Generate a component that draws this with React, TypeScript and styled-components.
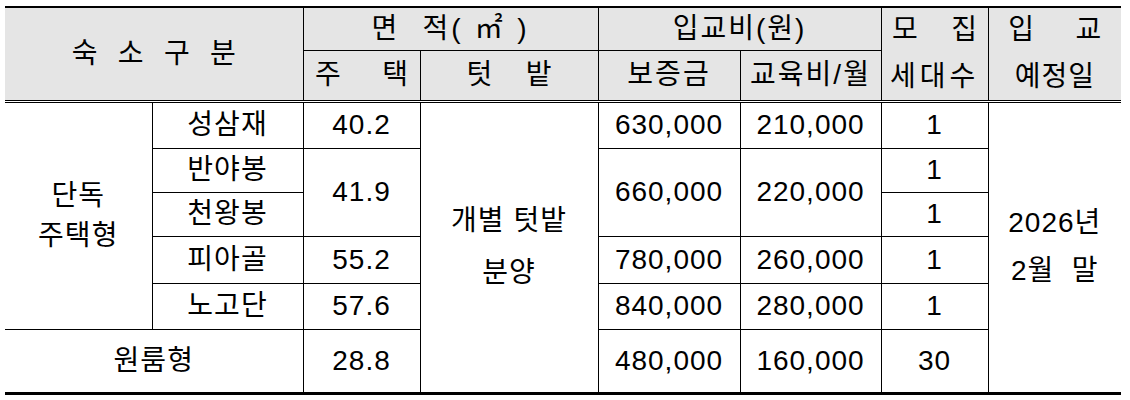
import React from 'react'
import styled, { createGlobalStyle } from 'styled-components'

const GlobalStyle = createGlobalStyle`
  body {
    margin: 0;
    background: #fff;
    font-family: "Liberation Sans", "Noto Sans CJK KR", sans-serif;
    color: #000;
  }
`

const Page = styled.div`
  padding: 6px 0 0 5px;
`

const Table = styled.table`
  border-collapse: collapse;
  table-layout: fixed;
  width: 1116px;
  border-top: 2px solid #000;
  border-bottom: 3px solid #000;
  font-size: 28px;
`

const Row = styled.tr<{ $h: number }>`
  height: ${({ $h }) => $h}px;
`

const Cell = styled.td<{ $noLeft?: boolean; $noRight?: boolean; $lh?: number }>`
  border: 1px solid #000;
  border-left: ${({ $noLeft }) => ($noLeft ? 'none' : '1px solid #000')};
  border-right: ${({ $noRight }) => ($noRight ? 'none' : '1px solid #000')};
  padding: 0;
  text-align: center;
  vertical-align: middle;
  letter-spacing: 1px;
  line-height: ${({ $lh }) => ($lh ? `${$lh}px` : '32px')};
  font-weight: normal;
`

const Head = styled(Cell).attrs({ as: 'th' })<{ $double?: boolean }>`
  background: #e5e5e5;
  border-bottom: ${({ $double }) => ($double ? '3px double #000' : '1px solid #000')};
`

const Spread = styled.span<{ $w: number; $ls?: number }>`
  display: inline-block;
  width: ${({ $w }) => $w}px;
  text-align: justify;
  text-align-last: justify;
  letter-spacing: ${({ $ls }) => $ls ?? 0}px;
  white-space: nowrap;
`

const Spaced = styled.span<{ $ls: number }>`
  letter-spacing: ${({ $ls }) => $ls}px;
`

const HeadLine = styled.div<{ $gap?: number }>`
  line-height: 40px;
  margin-top: ${({ $gap }) => $gap ?? 0}px;
`

const widths = [147, 151, 117, 178, 142, 141, 107, 133]

export default function App() {
  return (
    <Page>
      <GlobalStyle />
      <Table>
        <colgroup>
          {widths.map((w, i) => (
            <col key={i} style={{ width: w }} />
          ))}
        </colgroup>
        <thead>
          <Row $h={43}>
            <Head colSpan={2} rowSpan={2} $noLeft $double>
              <Spread $w={164}>숙 소 구 분</Spread>
            </Head>
            <Head colSpan={2}>
              <Spread $w={158} $ls={3}>면 적(㎡)</Spread>
            </Head>
            <Head colSpan={2}>
              <Spaced $ls={2}>입교비(원)</Spaced>
            </Head>
            <Head rowSpan={2} $double>
              <HeadLine>
                <Spread $w={85}>모 집</Spread>
              </HeadLine>
              <HeadLine $gap={7}>
                <Spaced $ls={4}>세대수</Spaced>
              </HeadLine>
            </Head>
            <Head rowSpan={2} $noRight $double>
              <HeadLine>
                <Spread $w={93}>입 교</Spread>
              </HeadLine>
              <HeadLine $gap={7}>
                <Spaced $ls={1}>예정일</Spaced>
              </HeadLine>
            </Head>
          </Row>
          <Row $h={51}>
            <Head $double>
              <Spread $w={93}>주 택</Spread>
            </Head>
            <Head $double>
              <Spread $w={85}>텃 밭</Spread>
            </Head>
            <Head $double>
              <Spaced $ls={2}>보증금</Spaced>
            </Head>
            <Head $double>
              <Spaced $ls={2}>교육비/월</Spaced>
            </Head>
          </Row>
        </thead>
        <tbody>
          <Row $h={47}>
            <Cell rowSpan={5} $noLeft $lh={40}>
              단독
              <br />
              주택형
            </Cell>
            <Cell>성삼재</Cell>
            <Cell>40.2</Cell>
            <Cell rowSpan={6} $lh={52}>
              개별 텃밭
              <br />
              분양
            </Cell>
            <Cell>630,000</Cell>
            <Cell>210,000</Cell>
            <Cell>1</Cell>
            <Cell rowSpan={6} $noRight $lh={48}>
              2026년
              <br />
              2월&nbsp;&nbsp;말
            </Cell>
          </Row>
          <Row $h={44}>
            <Cell>반야봉</Cell>
            <Cell rowSpan={2}>41.9</Cell>
            <Cell rowSpan={2}>660,000</Cell>
            <Cell rowSpan={2}>220,000</Cell>
            <Cell>1</Cell>
          </Row>
          <Row $h={44}>
            <Cell>천왕봉</Cell>
            <Cell>1</Cell>
          </Row>
          <Row $h={47}>
            <Cell>피아골</Cell>
            <Cell>55.2</Cell>
            <Cell>780,000</Cell>
            <Cell>260,000</Cell>
            <Cell>1</Cell>
          </Row>
          <Row $h={46}>
            <Cell>노고단</Cell>
            <Cell>57.6</Cell>
            <Cell>840,000</Cell>
            <Cell>280,000</Cell>
            <Cell>1</Cell>
          </Row>
          <Row $h={64}>
            <Cell colSpan={2} $noLeft>
              원룸형
            </Cell>
            <Cell>28.8</Cell>
            <Cell>480,000</Cell>
            <Cell>160,000</Cell>
            <Cell>30</Cell>
          </Row>
        </tbody>
      </Table>
    </Page>
  )
}
